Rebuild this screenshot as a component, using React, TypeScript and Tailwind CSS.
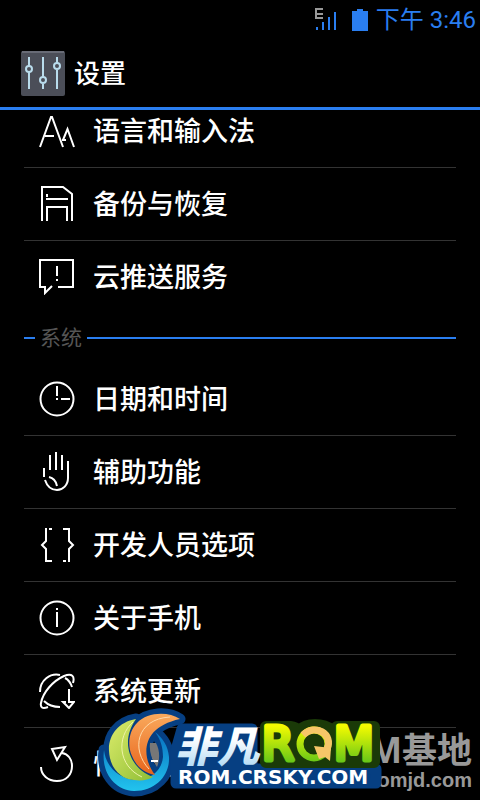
import React from "react";

const stroke = {
  fill: "none",
  stroke: "white",
  strokeWidth: 2,
};

const FontIcon = () => (
  <svg viewBox="0 0 36 36" className="h-9 w-9" {...stroke}>
    <path d="M1 34 12 4h1l11 30M6 23h9M23 27h4M24 27l4.500-11L35 34" />
  </svg>
);

const DiskIcon = () => (
  <svg viewBox="0 0 36 36" className="h-9 w-9" {...stroke}>
    <path d="M3 35V1h21l9 7v27M7 13h22M8 35V21h20v14M8 8v3" />
  </svg>
);

const PushIcon = () => (
  <svg viewBox="0 0 36 36" className="h-9 w-9" {...stroke}>
    <path d="M19 28h15V1H1v27h5v6l7-7M18 7v10M18 20v2" />
  </svg>
);

const ClockIcon = () => (
  <svg viewBox="0 0 36 36" className="h-9 w-9" {...stroke}>
    <circle cx="18" cy="18" r="16.5" />
    <path d="M18 5v10M22 18h9M17 18h2" />
  </svg>
);

const HandIcon = () => (
  <svg viewBox="0 0 36 40" className="h-10 w-9" {...stroke}>
    <path d="M5 16v9M11 3v15M17 0v18M23 3v15M29 9v17c0 7-5 12-11 12S8 34 6 28M10 25c5 1 7 4 8 9" />
  </svg>
);

const BracesIcon = () => (
  <svg viewBox="0 0 36 36" className="h-9 w-9" {...stroke}>
    <path d="M10 2h3M7 1v13l-4 4 4 4v12h6M24 2h6v12l4 4-4 4v13M24 34h3" />
  </svg>
);

const InfoIcon = () => (
  <svg viewBox="0 0 36 36" className="h-9 w-9" {...stroke}>
    <circle cx="18" cy="18" r="16.5" />
    <path d="M18 13v14M17 13h2M18 8v2" />
  </svg>
);

const UpdateIcon = () => (
  <svg viewBox="0 0 36 36" className="h-9 w-9" {...stroke}>
    <path d="M1 19C1 7 11 0 21 2M9 34c-5 2-8 1-7-4C4 19 14 8 25 3c8-3 11 0 9 7M26 5c4 2 6 6 7 9M5 28c4 4 9 6 16 6M30 16v13h5l-5 6-6-6h3" />
  </svg>
);

const ResetIcon = () => (
  <svg viewBox="0 0 36 40" className="h-10 w-9" {...stroke}>
    <path d="M2 23c0 8 7 14 16 14s15-6 15-15c0-7-4-12-10-13M13 5l13-2-8 13z" />
  </svg>
);

const deviceItems = [
  { icon: FontIcon, label: "语言和输入法" },
  { icon: DiskIcon, label: "备份与恢复" },
  { icon: PushIcon, label: "云推送服务" },
];

const systemItems = [
  { icon: ClockIcon, label: "日期和时间" },
  { icon: HandIcon, label: "辅助功能" },
  { icon: BracesIcon, label: "开发人员选项" },
  { icon: InfoIcon, label: "关于手机" },
  { icon: UpdateIcon, label: "系统更新" },
  { icon: ResetIcon, label: "恢复出厂设置" },
];

interface SettingsListProps {
  items: { icon: React.FC; label: string }[];
}

const SettingsList: React.FC<SettingsListProps> = ({ items }) => (
  <ul className="divide-y divide-[#333333]">
    {items.map(({ icon: Icon, label }) => (
      <li key={label}>
        <button className="flex h-18 w-full items-center gap-[18px] px-[15px] text-left text-[27px] leading-9 font-medium">
          <span className="flex w-9 shrink-0 justify-center">
            <Icon />
          </span>
          <span className="pt-[2px]">{label}</span>
        </button>
      </li>
    ))}
  </ul>
);

const StatusBar = () => (
  <div className="flex h-10 items-center justify-end pr-1 text-[24px] leading-8 text-[#2a7ef0]">
    <svg viewBox="0 0 24 24" className="mr-3.5 h-6 w-6" fill="currentColor">
      <path d="M1 0h8v2H3v3h6v2H3v2h6v2H1z" fill="#999999" />
      <path d="M2 19h2v3H2zM8 14h2v8H8zM14 9h2v13h-2zM20 4h2v18h-2z" />
    </svg>
    <svg viewBox="0 0 16 22" className="mr-2 h-[22px] w-4" fill="currentColor">
      <path d="M5 0h6v2h5v20H0V2h5z" />
    </svg>
    下午 3:46
  </div>
);

const SlidersIcon = () => (
  <svg viewBox="0 0 44 45" className="h-[45px] w-11" fill="none" stroke="#b9dcec" strokeWidth="2">
    <rect width="44" height="45" rx="2" fill="#4b4e58" stroke="none" />
    <path d="M1 1h42" stroke="#686b76" />
    <path d="M8 6v9M8 21v17M22 6v20M22 33v5M36 6v6M36 19v19" />
    <circle cx="8" cy="18" r="3" />
    <circle cx="22" cy="29" r="3" />
    <circle cx="36" cy="15" r="3" />
  </svg>
);

const SEA = "M8 50C5 72 18 90 38 91c22 0 36-16 35-34-1-11-6-19-14-25 6 8 8 16 8 25-1 13-12 23-27 23C24 79 10 68 8 50z";
const LEAF = "M40 19C22 22 12 36 13 51c1 18 12 28 25 29 8 1 14 0 19-3C35 69 23 43 40 19z";
const FLAME = "M84 19C72 11 51 12 41 23c-8 8-10 22-5 33 4 10 12 17 23 19C46 58 43 28 84 19z";

const BrandLogo = () => (
  <svg viewBox="0 0 292 100" className="absolute bottom-0 left-24 h-[100px] w-[292px]">
    <defs>
      <linearGradient id="lime" gradientUnits="userSpaceOnUse" x1="0" y1="26" x2="0" y2="62">
        <stop offset="0" stopColor="#f4fb00" />
        <stop offset="1" stopColor="#67c718" />
      </linearGradient>
      <linearGradient id="leaf" x1="0" y1="0" x2="1" y2="1">
        <stop offset="0" stopColor="#dcec6b" />
        <stop offset="1" stopColor="#8fbe35" />
      </linearGradient>
      <linearGradient id="flame" x1="0" y1="0" x2="0" y2="1">
        <stop offset="0" stopColor="#f9a95c" />
        <stop offset="1" stopColor="#e8641c" />
      </linearGradient>
      <linearGradient id="sea" x1="0" y1="0" x2="0" y2="1">
        <stop offset="0" stopColor="#0870c0" />
        <stop offset="1" stopColor="#22c4ee" />
      </linearGradient>
      <linearGradient id="ice" gradientUnits="userSpaceOnUse" x1="0" y1="26" x2="0" y2="66">
        <stop offset="0.3" stopColor="#ffffff" />
        <stop offset="1" stopColor="#b5dcf5" />
      </linearGradient>
    </defs>
    <g fill="#063f82" stroke="#063f82" strokeWidth="11" strokeLinejoin="round">
      <path d={SEA} />
      <path d={LEAF} />
      <path d={FLAME} />
      <path d="M86 29h70v40h124v14H80V50z" />
    </g>
    <path d="M54 43h6c4 7 4 17 1 24-5-7-8-15-7-24z" fill="#777777" />
    <path d="M55 61h7" stroke="white" strokeWidth="2" />
    <path d={SEA} fill="url(#sea)" />
    <path d={LEAF} fill="url(#leaf)" />
    <path d="M37 22C20 37 22 66 46 77" fill="none" stroke="#eef3a8" />
    <path d={FLAME} fill="url(#flame)" />
    <path d="M74 17C40 19 35 50 53 69" fill="none" stroke="#ffd9a8" />
    <path
      d="M170 27h24q6 1 9 4 6-6 16-6t18 6l4-4h37v35H170z"
      fill="#1a3a08"
      stroke="#1a3a08"
      strokeWidth="12"
      strokeLinejoin="round"
    />
    <text x="79" y="62" fontSize="42" fontWeight="900" fontStyle="italic" fill="url(#ice)" className="font-['Noto_Sans_CJK_SC',sans-serif]">非凡</text>
    <g fill="url(#lime)" stroke="url(#lime)" strokeWidth="5" strokeLinejoin="round" fontSize="46" className="font-['DejaVu_Sans',sans-serif]">
      <text x="166" y="60">R</text>
      <text x="238" y="60">M</text>
    </g>
    <circle cx="218" cy="44" r="14" fill="none" stroke="url(#lime)" strokeWidth="7" />
    <path d="M207 35c12-12 31-1 24 14" fill="none" stroke="#f6c668" strokeWidth="7" />
    <path d="m218 46 17 2-1 13-5-4-6 2z" fill="#f6c668" />
    <text x="82" y="84" fontSize="20" fontWeight="700" fill="white" className="font-['DejaVu_Sans',sans-serif]">ROM.CRSKY.COM</text>
  </svg>
);

export default function App() {
  return (
    <main className="relative h-screen overflow-hidden bg-black font-['Roboto','Noto_Sans_CJK_SC',sans-serif] text-white">
      <StatusBar />
      <header className="flex h-[70px] items-center gap-[9px] border-b-3 border-[#2a7ef0] px-[21px] text-[26px] leading-9 font-medium">
        <SlidersIcon />
        <h1>设置</h1>
      </header>
      <div className="-mt-[15px] px-6">
        <SettingsList items={deviceItems} />
        <h2 className="flex h-[50px] items-center gap-[5px] text-[21px] leading-7 text-[#555555]">
          <span className="h-[2px] w-[11px] bg-[#2a7ef0]" />
          系统
          <span className="h-[2px] flex-1 bg-[#2a7ef0]" />
        </h2>
        <SettingsList items={systemItems} />
      </div>
      <div className="absolute right-2 bottom-2 text-right font-bold text-[#999999]">
        <div className="font-['Open_Sans','Noto_Sans_CJK_SC',sans-serif] text-[35px] leading-9">ROM基地</div>
        <div className="font-['Liberation_Sans',sans-serif] text-[20px] leading-6">www.romjd.com</div>
      </div>
      <BrandLogo />
    </main>
  );
}
